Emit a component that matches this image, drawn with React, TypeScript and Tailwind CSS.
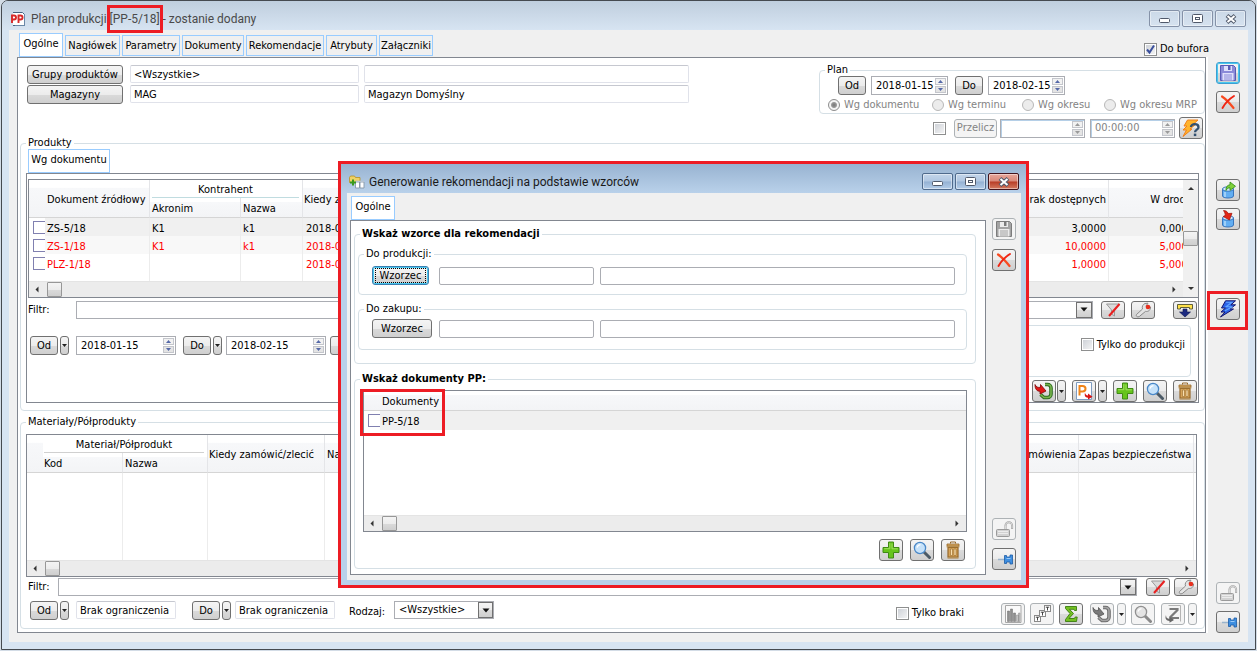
import type { ReactNode } from 'react';

const TEXT = "font-['DejaVu_Sans_Condensed','DejaVu_Sans','Liberation_Sans',sans-serif] text-[11px] leading-[14px]";
const FACE = 'bg-[linear-gradient(#f4f4f4_0%,#ececec_50%,#dadada_52%,#cfcfcf_100%)]';

/* ---------- icons ---------- */

function Svg({ children, w = 20, h = 18 }: { children: ReactNode; w?: number; h?: number }) {
  return (
    <svg width={w} height={h} viewBox={`0 0 ${w} ${h}`} className="shrink-0" aria-hidden="true">
      {children}
    </svg>
  );
}

function FloppyIcon({ gray = false }: { gray?: boolean }) {
  const body = gray ? '#a4a4a4' : '#8a8ad8';
  const edge = gray ? '#7c7c7c' : '#5a5ab4';
  const pale = gray ? '#ececec' : '#dfe0fb';
  return (
    <Svg>
      <path d="M2.5 1.5h13l2 2v13h-15z" fill={body} stroke={edge} />
      <rect x="6" y="2" width="8" height="5" fill={pale} />
      <rect x="10" y="2" width="2.5" height="4" fill={edge} />
      <rect x="4.5" y="9" width="11" height="7.5" fill={pale} />
      <path d="M6 11h8M6 13h8M6 15h8" stroke={body} />
    </Svg>
  );
}

function CrossIcon() {
  return (
    <Svg>
      <path d="M4 3.5C7 5.500 12 10.500 15.500 15" stroke="#f84a20" strokeWidth="2.200" strokeLinecap="round" fill="none" />
      <path d="M16 3C12 5.500 7 10.500 4.500 15" stroke="#f02412" strokeWidth="1.900" strokeLinecap="round" fill="none" />
    </Svg>
  );
}

function CylinderIcon({ down = false }: { down?: boolean }) {
  return (
    <Svg>
      <path d="M4.500 8v7c0 1.200 2.500 2 5.500 2s5.500-.8 5.500-2V8z" fill="#62aef2" stroke="#2b6cb8" strokeWidth=".9" />
      <ellipse cx="10" cy="8" rx="5.500" ry="2.200" fill="#d4eafc" stroke="#2b6cb8" strokeWidth=".9" />
      <path d="M7 11v5" stroke="#b4daf8" strokeWidth="1.500" />
      {down ? (
        <path d="M5.500.5c2.500 0 4 1.300 4.700 3l3.800-.2-2.600 6.700-6.200-3.500 2.200-1.200C7.200 3.500 6.500 2 5.500.5z" fill="#e32616" stroke="#9c120a" strokeWidth=".7" />
      ) : (
        <path d="M8 9.500c-.3-3.500 1.500-5.500 4-5.700V1l5.500 4.300-5.500 4V6.800c-1.700 0-3 .7-4 2.700z" fill="#7fd13b" stroke="#2f8a12" strokeWidth=".8" />
      )}
    </Svg>
  );
}

function BoltIcon() {
  return (
    <Svg>
      <path d="M7.500.8H17.500L13 4.800h4.500L12 9h3.500L2.500 17l4.500-5H3l4.500-4H3.500z" fill="#2c62e8" stroke="#14146c" strokeWidth="1" strokeLinejoin="round" />
      <path d="M8 2.200h6L8 6.800h6.500L7 10.800" fill="none" stroke="#62a8ff" strokeWidth="1.100" />
    </Svg>
  );
}

function BoltQuestionIcon() {
  return (
    <Svg>
      <path d="M6.500 1H17l-5 4.500h2.500L9 10h2L2 17.500l3.500-6.500H2L6 7H3z" fill="#ffb42c" stroke="#f0801a" strokeLinejoin="round" />
      <path d="M10 8c0-3.800 7.500-3.800 7.500.2 0 2.400-3.500 2.400-3.500 5" fill="none" stroke="#33506f" strokeWidth="2.300" />
      <rect x="12.800" y="14.600" width="2.500" height="2.500" fill="#33506f" />
    </Svg>
  );
}

function LockIcon() {
  return (
    <Svg>
      <path d="M11.500 9V5.500a3.300 3.300 0 0 1 6.600 0V9" fill="none" stroke="#a0a0a0" strokeWidth="2" />
      <path d="M11.500 9V5.500a3.300 3.300 0 0 1 6.600 0V8.500" fill="none" stroke="#e8e8e8" strokeWidth=".8" />
      <rect x="2.500" y="9.500" width="13" height="7" rx="1" fill="#d2d2d2" stroke="#9a9a9a" />
      <path d="M4 11.500h10M4 13.500h10" stroke="#ececec" />
    </Svg>
  );
}

function PinIcon() {
  return (
    <Svg>
      <path d="M4 9.500h7" stroke="#9ab4cc" strokeWidth="1.500" />
      <path d="M10.500 5.500h2v1.500h3.500V5h2.500v9H16v-2h-3.500v1.500h-2z" fill="#3f8fe0" stroke="#1d5ca6" strokeWidth=".8" />
      <path d="M12.500 8.500h4" stroke="#9bcbfa" />
    </Svg>
  );
}

function PlusIcon() {
  return (
    <Svg>
      <path d="M7.500 1h5v5.500H18v5h-5.500V17h-5v-5.500H2v-5h5.500z" fill="#66c41c" stroke="#3f8a14" />
      <path d="M8.800 2.200v5.500H3.200M11 2.500v5.300h5.800" fill="none" stroke="#a0e060" />
    </Svg>
  );
}

function LensIcon({ gray = false }: { gray?: boolean }) {
  return (
    <Svg>
      <path d="M12 11l5.500 5.500" stroke={gray ? '#8a8a8a' : '#4c5a66'} strokeWidth="3" strokeLinecap="round" />
      <circle cx="8" cy="7" r="5.600" fill={gray ? '#e4e4e4' : '#c6e2fa'} stroke={gray ? '#909090' : '#4a88c8'} strokeWidth="1.300" />
      <path d="M5 6.500c.5-1.800 1.800-2.600 3.500-2.800" stroke="#fff" strokeWidth="1.300" fill="none" />
    </Svg>
  );
}

function TrashIcon() {
  return (
    <Svg>
      <path d="M7.500 2.500V1h5v1.500" fill="none" stroke="#96682a" />
      <path d="M4 3h12v2H4z" fill="#dcae68" stroke="#96682a" strokeWidth=".8" />
      <path d="M5 6.500h10V16H5z" fill="#d6a45a" stroke="#96682a" strokeWidth="1.200" />
      <path d="M7.500 8h2v6.500h-2zM11 8h2v6.500h-2z" fill="#f9dfae" stroke="#96682a" strokeWidth=".6" />
      <path d="M3.500 5.800h13M4.500 17h11" stroke="#b08038" />
    </Svg>
  );
}

function FunnelOffIcon() {
  return (
    <Svg h={16}>
      <path d="M3.500 2h13l-5 6v6l-3-2V8z" fill="#dadada" stroke="#9a9a9a" />
      <path d="M16.500 2L6 14" stroke="#e82020" strokeWidth="2" />
    </Svg>
  );
}

function WrenchIcon() {
  return (
    <Svg h={16}>
      <path d="M3.500 12.500l6-5.500c-.8-2.500.3-4.600 2.500-5.500l3-.3L13 4l1.500 2.200L17.500 5c.3 2.800-2 5-5 4.400l-6.300 5.200c-2 1-3.500-.6-2.700-2.100z" fill="#e4e4e4" stroke="#8a8a8a" />
      <circle cx="15" cy="5" r="2.300" fill="#e8301e" />
    </Svg>
  );
}

function CollectIcon() {
  return (
    <Svg h={16}>
      <path d="M2.500 2.500h15v4.500h-3V5.500h-9V7h-3z" fill="#ffe14a" stroke="#50502e" strokeWidth=".9" />
      <path d="M8 7h4v3h3.500L10 15 4.500 10H8z" fill="#1c2a80" stroke="#10184e" strokeWidth=".6" />
    </Svg>
  );
}

function RecycleIcon({ gray = false }: { gray?: boolean }) {
  return (
    <Svg>
      <path d="M11 2.500h2.500c2 0 3.500 1.400 3.500 3.500v6c0 2-1.500 3.500-3.500 3.500H10L6.500 12.500" fill="none" stroke={gray ? '#6c6c6c' : '#2c6a20'} strokeWidth="3.600" />
      <path d="M11 2.500h2.500c2 0 3.500 1.400 3.500 3.500v6c0 2-1.500 3.500-3.500 3.500H10L6.500 12.500" fill="none" stroke={gray ? '#a4a4a4' : '#78b44c'} strokeWidth="1.600" />
      <path d="M1 2.500c1 2.500 3 3.300 5.500 2.800V2.500l5.500 6.500-6 3V9.300C3 9.200 1 7.500 1 2.500z" fill={gray ? '#7a7a7a' : '#e01818'} stroke={gray ? '#505050' : '#7c0808'} strokeWidth=".8" />
    </Svg>
  );
}

function DocumentPIcon() {
  return (
    <Svg>
      <path d="M2.500.5h15v17h-15z" fill="#fff" stroke="#7f9cc0" />
      <path d="M5.500 13.500V4h3c4 0 4 5.500 0 5.500H6" fill="none" stroke="#f08418" strokeWidth="2" />
      <path d="M11 10.500c.3 2 1 2.700 3 2.900V11.500l4.500 3.300-4.500 2.700v-1.800c-3 0-3.700-2.200-3-5.200z" fill="#d81414" />
    </Svg>
  );
}

function DocumentZIcon() {
  return (
    <Svg>
      <path d="M5.500.5h12v16" fill="none" stroke="#b4b4b4" />
      <path d="M6.500 4h8v1l-7 7v1h8.500" fill="none" stroke="#7a7a7a" strokeWidth="2.200" />
      <path d="M3 10c0 3 1.500 3.600 3.500 3.700V11.500l4.500 3.500-4.500 2.700v-1.800C3.500 15.700 1.500 14 3 10z" fill="#666" />
    </Svg>
  );
}

function ChartIcon() {
  return (
    <Svg>
      <path d="M2.500.5h15.500v17H2.500z" fill="#fafafa" stroke="#a8a8a8" />
      <path d="M4.500 6h2v10.500h-2zM7.500 4h2v12.500h-2zM10.500 8h2v8.500h-2z" fill="#8f8f8f" stroke="#6a6a6a" strokeWidth=".5" />
      <path d="M13.500 10h2v6.500h-2zM15.500 8h1.500v8.500h-1.500z" fill="#c4c4c4" stroke="#8a8a8a" strokeWidth=".5" />
    </Svg>
  );
}

function CascadeIcon() {
  return (
    <Svg>
      {[[2, 11], [7, 6], [12, 1]].map(([x, y]) => (
        <g key={x}>
          <rect x={x + 0.5} y={y - 0.5} width="6" height="6" fill="#fff" stroke="#8a8a8a" />
          <path d={`M${x + 1.8} ${y + 1.2}h3.400M${x + 3.5} ${y + 1}v3.500`} stroke="#444" />
        </g>
      ))}
    </Svg>
  );
}

function SumIcon() {
  return (
    <Svg>
      <path d="M4.500 1.500h11v4h-2l-.5-1.200H8.500l4 4.200-4.500 5h5.500l.7-1.500h2L15.500 16.500h-11v-2l4.500-6-4.500-5z" fill="#74c022" stroke="#3a7c10" strokeWidth=".9" />
    </Svg>
  );
}

function PlanIcon() {
  return (
    <Svg w={16} h={16}>
      <path d="M3 1.500h9.500l2 2v11H3" fill="#fff" stroke="#44607e" />
      <path d="M5 14.500h9.500V3" fill="none" stroke="#6a88a8" />
      <path d="M2 12V4.500h2c2.700 0 2.700 4 0 4H2.500M8.500 12V4.500h2c2.700 0 2.700 4 0 4H9" fill="none" stroke="#d82828" strokeWidth="1.900" />
    </Svg>
  );
}

function FolderAddIcon() {
  return (
    <Svg w={16} h={14}>
      <path d="M.5 2.500l1-1.500h4l1 1.500H11v5H.5z" fill="#f0d264" stroke="#b89020" strokeWidth=".8" />
      <path d="M6.500 7h4v6h-4zM11 7h4v6h-4z" fill="#fff" stroke="#8796a8" strokeWidth=".9" />
      <path d="M6.500 6.300h8.500" stroke="#b8c4d2" strokeWidth="1.400" />
      <path d="M4 4.500v6M1 7.500h6" stroke="#3a9a1c" strokeWidth="2" />
    </Svg>
  );
}

function Triangle({ dir, color = '#333' }: { dir: 'up' | 'down' | 'left' | 'right'; color?: string }) {
  const shapes = { up: 'M1 5L4 2L7 5z', down: 'M1 2L4 5L7 2z', left: 'M5.500 0.500L2.500 3.500L5.500 6.500z', right: 'M2.500 0.500L5.500 3.500L2.500 6.500z' };
  return (
    <svg width="8" height="7" viewBox="0 0 8 7" className="shrink-0" aria-hidden="true">
      <path d={shapes[dir]} fill={color} />
    </svg>
  );
}

/* ---------- controls ---------- */

function Btn({ children, className = '', disabled = false, focused = false }: { children: ReactNode; className?: string; disabled?: boolean; focused?: boolean }) {
  const look = disabled ? 'border-[#adb2b5] bg-[#f4f4f4] text-[#838383]' : focused ? `border-[#3c7fb1] ring-1 ring-inset ring-[#48c8f0] ${FACE}` : `border-[#707070] ${FACE}`;
  return (
    <button type="button" disabled={disabled} className={`flex h-[19px] shrink-0 items-center justify-center rounded-[3px] border whitespace-nowrap ${look} ${className}`}>
      {focused ? <span className="border border-dotted border-black px-[4px] leading-[13px]">{children}</span> : children}
    </button>
  );
}

function IconBtn({ label, children, muted = false, focused = false, short = false }: { label: string; children: ReactNode; muted?: boolean; focused?: boolean; short?: boolean }) {
  const look = muted ? 'border-[#adb2b5] bg-[#f4f4f4]' : focused ? `border-[#3c9fd1] ring-1 ring-inset ring-[#48c8f0] ${FACE}` : `border-[#707070] ${FACE}`;
  return (
    <button type="button" aria-label={label} className={`flex w-[24px] shrink-0 items-center justify-center rounded-[3px] border ${short ? 'h-[18px]' : 'h-[22px]'} ${look}`}>
      {children}
    </button>
  );
}

function Split({ tall = false, muted = false }: { tall?: boolean; muted?: boolean }) {
  return (
    <button type="button" aria-label="Więcej opcji" className={`flex w-[9px] shrink-0 items-center justify-center rounded-[3px] border ${tall ? 'h-[22px]' : 'h-[19px]'} ${muted ? 'border-[#adb2b5] bg-[#f4f4f4]' : `border-[#707070] ${FACE}`}`}>
      <svg width="5" height="3" viewBox="0 0 5 3" aria-hidden="true">
        <path d="M0 0h5L2.500 3z" fill="#222" />
      </svg>
    </button>
  );
}

function Field({ label, value = '', className = '', strong = false }: { label: string; value?: string; className?: string; strong?: boolean }) {
  return <input aria-label={label} defaultValue={value} className={`h-[18px] min-w-0 rounded-[2px] border bg-white px-[3px] outline-none ${strong ? 'border-[#abadb3]' : 'border-[#e0e2ea] border-t-[#c6c8d0]'} ${className}`} />;
}

function Spin({ label, value, className, muted = false }: { label: string; value: string; className: string; muted?: boolean }) {
  const arrow = muted ? '#9a9a9a' : '#5468a8';
  return (
    <span className={`flex h-[19px] shrink-0 border bg-white ${muted ? 'border-[#abadb3] shadow-[inset_1px_1px_0_#b5cfe7]' : 'border-[#abadb3]'} ${className}`}>
      <input aria-label={label} defaultValue={value} disabled={muted} className={`w-0 min-w-0 flex-1 bg-transparent pl-[4px] outline-none ${muted ? 'text-[#838383]' : ''}`} />
      <span className="m-px flex w-[11px] flex-col gap-px">
        <button type="button" aria-label={`${label}: zwiększ`} className="flex h-[7px] items-center justify-center border border-[#c4c6cc] bg-[#f2f2f2]">
          <svg width="5" height="3" viewBox="0 0 5 3" aria-hidden="true"><path d="M0 3L2.500 0L5 3z" fill={arrow} /></svg>
        </button>
        <button type="button" aria-label={`${label}: zmniejsz`} className="flex h-[7px] items-center justify-center border border-[#c4c6cc] bg-[#e4e4e4]">
          <svg width="5" height="3" viewBox="0 0 5 3" aria-hidden="true"><path d="M0 0L2.500 3L5 0z" fill={arrow} /></svg>
        </button>
      </span>
    </span>
  );
}

function Check({ children, label, checked = false }: { children?: ReactNode; label?: string; checked?: boolean }) {
  return (
    <label className="flex items-center gap-[3px] whitespace-nowrap">
      <span className="relative flex h-[13px] w-[13px]">
        <input type="checkbox" aria-label={label} defaultChecked={checked} className="peer h-[13px] w-[13px] appearance-none border border-[#8e8f8f] bg-[linear-gradient(135deg,#cbcfd5,#f6f6f6)] shadow-[inset_0_0_0_1px_#fff]" />
        <svg width="13" height="13" viewBox="0 0 13 13" className="pointer-events-none absolute inset-0 hidden peer-checked:block" aria-hidden="true">
          <path d="M3 6.500l2.500 3L10 2.500" fill="none" stroke="#3a4f9c" strokeWidth="2" />
        </svg>
      </span>
      {children}
    </label>
  );
}

function Radio({ children, checked = false, className }: { children: ReactNode; checked?: boolean; className: string }) {
  return (
    <label className={`flex shrink-0 items-center gap-[4px] whitespace-nowrap text-[#838383] ${className}`}>
      <input type="radio" name="basis" disabled defaultChecked={checked} className="h-[12px] w-[12px] appearance-none rounded-full border border-[#b8b8b8] bg-[#ececec] checked:border-[#8e8e8e] checked:bg-[radial-gradient(#777_0%,#999_35%,#f4f4f4_50%)]" />
      {children}
    </label>
  );
}

function Group({ title, bold = false, className = '', children }: { title: string; bold?: boolean; className?: string; children: ReactNode }) {
  return (
    <fieldset className={`min-w-0 rounded-[4px] border border-[#d5dfe5] ${className}`}>
      <legend className={`px-[2px] ${bold ? 'ml-[2px] font-bold' : ''}`}>{title}</legend>
      {children}
    </fieldset>
  );
}

function Tab({ children, active = false, className }: { children: ReactNode; active?: boolean; className: string }) {
  return (
    <button type="button" role="tab" aria-selected={active} className={`shrink-0 border border-[#99ccff] text-center whitespace-nowrap ${active ? 'h-[24px] bg-white pb-[3px]' : 'mb-px h-[21px] bg-[#f0f0f0]'} ${className}`}>
      {children}
    </button>
  );
}

function WindowButtons({ active = false }: { active?: boolean }) {
  const base = active
    ? 'border-[#4f6a8c] bg-[linear-gradient(#c3d5ea_0%,#b0c7e2_48%,#94b1d3_52%,#b4cde9_100%)]'
    : 'border-[#8592a8] bg-[linear-gradient(#cbd9e8,#d6e2ef)]';
  const close = active ? 'border-[#43141c] bg-[linear-gradient(#e8a79b_0%,#d88878_48%,#b83c26_52%,#d47a60_100%)]' : base;
  const box = 'flex h-[17px] w-[31px] items-center justify-center rounded-[2px] border shadow-[inset_0_0_0_1px_rgba(255,255,255,0.45)]';
  return (
    <div className="flex gap-[2px]">
      <button type="button" aria-label="Minimalizuj" className={`${box} ${base}`}>
        <svg width="12" height="10" viewBox="0 0 12 10" aria-hidden="true"><rect x=".5" y="4.500" width="10" height="4" rx="1" fill="#fff" stroke="#50596a" /></svg>
      </button>
      <button type="button" aria-label="Maksymalizuj" className={`${box} ${base}`}>
        <svg width="11" height="9" viewBox="0 0 11 9" aria-hidden="true"><rect x=".5" y=".5" width="10" height="8" rx="1" fill="#fff" stroke="#50596a" /><rect x="3.500" y="3.500" width="4" height="2" fill="none" stroke="#50596a" /></svg>
      </button>
      <button type="button" aria-label="Zamknij" className={`${box} ${close}`}>
        <svg width="12" height="10" viewBox="0 0 12 10" aria-hidden="true"><path d="M2 1.500l8 7M10 1.500l-8 7" stroke="#50596a" strokeWidth="4" /><path d="M2.500 2l7 6M9.500 2l-7 6" stroke="#fff" strokeWidth="2" /></svg>
      </button>
    </div>
  );
}

function HScroll() {
  return (
    <div className="flex h-[16px] flex-1 items-center border-t border-[#e4e4e4] bg-[#ececec] px-[4px]">
      <Triangle dir="left" />
      <span className={`ml-[6px] h-[15px] w-[15px] rounded-[1px] border border-[#979797] ${FACE}`} />
      <span className="ml-auto mr-[1px] flex"><Triangle dir="right" /></span>
    </div>
  );
}

function Combo({ label }: { label: string }) {
  return (
    <span className="flex h-[18px] min-w-0 flex-1 border border-[#abadb3] bg-white">
      <input aria-label={label} className="w-0 min-w-0 flex-1 px-[3px] outline-none" />
      <button type="button" aria-label="Rozwiń listę" className={`flex w-[16px] items-center justify-center border border-[#707070] ${FACE}`}>
        <ArrowDown />
      </button>
    </span>
  );
}

function ArrowDown() {
  return (
    <svg width="8" height="5" viewBox="0 0 8 5" aria-hidden="true">
      <path d="M0.500 0.500h7L4 4.500z" fill="#111" />
    </svg>
  );
}

function Mark({ className }: { className: string }) {
  return <span aria-hidden="true" className={`pointer-events-none absolute border-3 border-[#ed1c24] ${className}`} />;
}

/* ---------- tables ---------- */

const HEAD = 'border-b border-[#d5d5d5] bg-[linear-gradient(#fff_20%,#f7f8fa_22%,#f3f4f6_100%)] pt-[2px] pr-0 pb-0 pl-0 font-normal';
const LINE = 'border-r border-r-[#e4e5e8]';
const CELL = 'border-r border-[#ececec] px-[2px] pt-[3px] pb-0 whitespace-nowrap';
const EDGE = 'px-[3px] pt-[3px] pb-0 whitespace-nowrap';

function RowCheck({ label }: { label: string }) {
  return <input type="checkbox" aria-label={label} className="ml-[4px] block h-[13px] w-[12px] appearance-none border border-r-0 border-[#8080b0] bg-white" />;
}

const products = [
  { doc: 'ZS-5/18', code: 'K1', name: 'k1', when: '2018-01-15', missing: '3,0000', onWay: '0,0000', tone: 'bg-[#f0f0f0]' },
  { doc: 'ZS-1/18', code: 'K1', name: 'k1', when: '2018-01-15', missing: '10,0000', onWay: '5,0000', tone: 'bg-[#f8f8f8] text-[#ff0000]' },
  { doc: 'PLZ-1/18', code: '', name: '', when: '2018-01-15', missing: '1,0000', onWay: '5,0000', tone: 'text-[#ff0000]' },
];

function ProductsTable() {
  return (
    <div className="flex h-[119px] border border-r-0 border-[#828790] bg-white">
      <div className="flex min-w-0 flex-1 flex-col">
        <div className="h-[101px] overflow-hidden">
          <table className="h-full w-[calc(100%+14px)] table-fixed border-separate border-spacing-0">
            <colgroup>
              <col className="w-[16px]" />
              <col className="w-[105px]" />
              <col className="w-[91px]" />
              <col className="w-[62px]" />
              <col className="w-[120px]" />
              <col />
              <col className="w-[100px]" />
              <col className="w-[88px]" />
            </colgroup>
            <thead>
              <tr className="h-[18px]">
                <th rowSpan={2} className={HEAD} aria-label="Zaznaczenie" />
                <th rowSpan={2} className={`${HEAD} ${LINE} pl-[2px] text-left whitespace-nowrap`}>Dokument źródłowy</th>
                <th colSpan={2} className={`border-r border-[#e4e5e8] bg-white p-0 font-normal`}>
                  <div className="mx-[2px] mr-[3px] h-[18px] border-b border-[#c0dce0] pt-[3px]">Kontrahent</div>
                </th>
                <th rowSpan={2} className={`${HEAD} pl-px text-left whitespace-nowrap`}>Kiedy zl.</th>
                <th rowSpan={2} className={`${HEAD} ${LINE}`} />
                <th rowSpan={2} className={`${HEAD} ${LINE} pr-[2px] text-right whitespace-nowrap`}>Brak dostępnych</th>
                <th rowSpan={2} className={`${HEAD} text-right whitespace-nowrap`}>W drodze</th>
              </tr>
              <tr className="h-[20px]">
                <th className={`${HEAD} ${LINE} pl-[2px] text-left`}>Akronim</th>
                <th className={`${HEAD} ${LINE} pl-[2px] text-left`}>Nazwa</th>
              </tr>
            </thead>
            <tbody>
              {products.map((p) => (
                <tr key={p.doc} className={`h-[18px] ${p.tone}`}>
                  <td className="bg-white p-0"><RowCheck label={p.doc} /></td>
                  <td className={CELL}>{p.doc}</td>
                  <td className={CELL}>{p.code}</td>
                  <td className={CELL}>{p.name}</td>
                  <td className={EDGE}>{p.when}</td>
                  <td className={CELL} />
                  <td className={`${CELL} text-right`}>{p.missing}</td>
                  <td className={`${EDGE} text-right`}>{p.onWay}</td>
                </tr>
              ))}
              <tr aria-hidden="true">
                <td className="p-0" />
                <td className={CELL} />
                <td className={CELL} />
                <td className={CELL} />
                <td className="p-0" />
                <td className={CELL} />
                <td className={CELL} />
                <td className="p-0" />
              </tr>
            </tbody>
          </table>
        </div>
        <HScroll />
      </div>
      <div className="flex w-[15px] flex-col items-center bg-[#f0f0f0] py-[5px]">
        <Triangle dir="up" />
        <span className={`mt-[39px] h-[15px] w-[15px] rounded-[1px] border border-[#979797] ${FACE}`} />
        <span className="mt-auto flex"><Triangle dir="down" /></span>
      </div>
    </div>
  );
}

function MaterialsTable() {
  return (
    <div className="mt-[5px] mr-[2px] flex h-[143px] flex-col border border-[#828790] bg-white">
      <div className="h-[125px] overflow-hidden">
        <table className="h-full w-full table-fixed border-separate border-spacing-0">
          <colgroup>
            <col className="w-[16px]" />
            <col className="w-[80px]" />
            <col className="w-[85px]" />
            <col className="w-[117px]" />
            <col className="w-[100px]" />
            <col />
            <col className="w-[120px]" />
            <col className="w-[115px]" />
            <col className="w-[2px]" />
          </colgroup>
          <thead>
            <tr className="h-[18px]">
              <th rowSpan={2} className={HEAD} aria-label="Zaznaczenie" />
              <th colSpan={2} className="border-r border-[#e4e5e8] bg-white p-0 font-normal">
                <div className="mx-[1px] mr-[3px] h-[18px] border-b border-[#d0d0d0] pt-[3px]">Materiał/Półprodukt</div>
              </th>
              <th rowSpan={2} className={`${HEAD} ${LINE} pl-[1px] text-left whitespace-nowrap`}>Kiedy zamówić/zlecić</th>
              <th rowSpan={2} className={`${HEAD} pl-[2px] text-left whitespace-nowrap`}>Na kiedy</th>
              <th rowSpan={2} className={HEAD} />
              <th rowSpan={2} className={`${HEAD} ${LINE} pr-[2px] text-right whitespace-nowrap`}>Ilość zamówienia</th>
              <th rowSpan={2} className={`${HEAD} ${LINE} text-left whitespace-nowrap`}>Zapas bezpieczeństwa</th>
              <th rowSpan={2} className={HEAD} aria-label="Koniec" />
            </tr>
            <tr className="h-[20px]">
              <th className={`${HEAD} ${LINE} pl-[1px] text-left`}>Kod</th>
              <th className={`${HEAD} ${LINE} pl-[2px] text-left`}>Nazwa</th>
            </tr>
          </thead>
          <tbody>
            <tr>
              <td className="p-0" />
              <td className={CELL} />
              <td className={CELL} />
              <td className={CELL} />
              <td className="p-0" />
              <td className="p-0" />
              <td className={CELL} />
              <td className={CELL} />
              <td className="p-0" />
            </tr>
          </tbody>
        </table>
      </div>
      <HScroll />
    </div>
  );
}

/* ---------- dialog ---------- */

function Pattern({ title, className, children }: { title: string; className: string; children: ReactNode }) {
  return (
    <Group title={title} className={`pl-[5px] ${className}`}>
      <div className="flex items-end pr-[11px] pl-[8px]">
        <div className="w-[67px] shrink-0">{children}</div>
        <Field strong label={`${title} kod`} className="w-[155px] shrink-0" />
        <Field strong label={`${title} nazwa`} className="ml-[6px] flex-1" />
      </div>
    </Group>
  );
}

function Dialog() {
  return (
    <section role="dialog" aria-label="Generowanie rekomendacji na podstawie wzorców" className="absolute top-[161px] left-[338px] flex h-[427px] w-[691px] flex-col border-3 border-[#ed1c24] bg-[#b9d1ea]">
      <header className="flex h-[29px] items-center bg-[linear-gradient(#98b3d1,#b9d1ea)] pt-[6px] pr-[7px] pl-[8px]">
        <FolderAddIcon />
        <h2 className="ml-[4px] flex-1 pt-px font-['Roboto',sans-serif] text-[12px] text-[#1a1a1a]">Generowanie rekomendacji na podstawie wzorców</h2>
        <WindowButtons active />
      </header>
      <div className="mr-[5px] mb-[5px] ml-[6px] flex flex-1 bg-[#f0f0f0] pb-[5px]">
        <div className="flex min-w-0 flex-1 flex-col pt-[3px] pl-[3px]">
          <div role="tablist" className="pl-px"><Tab active className="block w-[44px]">Ogólne</Tab></div>
          <div className="flex-1 border border-[#828790] bg-white pt-[6px] pr-[9px] pl-[3px]">
            <Group title="Wskaż wzorce dla rekomendacji" bold className="pr-[8px] pb-[13px] pl-[3px]">
              <Pattern title="Do produkcji:" className="mt-[6px] pb-[9px]">
                <div className="pt-[5px]"><Btn focused className="w-[57px]">Wzorzec</Btn></div>
              </Pattern>
              <Pattern title="Do zakupu:" className="mt-[7px] pb-[11px]">
                <div className="pt-[3px]"><Btn className="w-[60px]">Wzorzec</Btn></div>
              </Pattern>
            </Group>
            <Group title="Wskaż dokumenty PP:" bold className="mt-[8px] pr-[8px] pb-[7px] pl-[3px]">
              <div className="relative mt-[4px] ml-[5px] flex h-[142px] flex-col border border-[#828790] bg-white">
                <table className="w-full table-fixed border-separate border-spacing-0">
                  <colgroup>
                    <col className="w-[16px]" />
                    <col />
                  </colgroup>
                  <thead>
                    <tr className="h-[20px]">
                      <th className={HEAD} aria-label="Zaznaczenie" />
                      <th className={`${HEAD} pl-[2px] text-left`}>Dokumenty</th>
                    </tr>
                  </thead>
                  <tbody>
                    <tr className="h-[19px]">
                      <td className="p-0"><RowCheck label="PP-5/18" /></td>
                      <td className="bg-[#f0f0f0] pt-[2px] pr-0 pb-0 pl-[2px]">PP-5/18</td>
                    </tr>
                  </tbody>
                </table>
                <div className="mt-auto flex"><HScroll /></div>
                <Mark className="top-[-2px] left-[-4px] h-[47px] w-[85px]" />
              </div>
              <div className="mt-[7px] mr-[2px] flex justify-end gap-[7px]">
                <IconBtn label="Dodaj"><PlusIcon /></IconBtn>
                <IconBtn label="Podgląd"><LensIcon /></IconBtn>
                <IconBtn label="Usuń"><TrashIcon /></IconBtn>
              </div>
            </Group>
          </div>
        </div>
        <div className="flex w-[35px] flex-col pt-[25px] pb-[5px] pl-[6px]">
          <IconBtn label="Zapisz" muted><FloppyIcon gray /></IconBtn>
          <div className="mt-[9px]"><IconBtn label="Anuluj"><CrossIcon /></IconBtn></div>
          <div className="mt-auto flex flex-col gap-[8px]">
            <IconBtn label="Odblokuj" muted><LockIcon /></IconBtn>
            <IconBtn label="Przypnij"><PinIcon /></IconBtn>
          </div>
        </div>
      </div>
    </section>
  );
}

/* ---------- main window ---------- */

function HeaderArea() {
  return (
    <div className="flex items-start justify-between">
      <div className="flex flex-col gap-px pt-[1px] pl-[9px]">
        <div className="flex items-start">
          <Btn className="w-[96px]">Grupy produktów</Btn>
          <Field label="Grupy produktów" value="<Wszystkie>" className="ml-[7px] w-[229px]" />
          <Field label="Grupy produktów, nazwa" className="ml-[5px] w-[325px]" />
        </div>
        <div className="flex items-start">
          <Btn className="w-[96px]">Magazyny</Btn>
          <Field label="Magazyn" value="MAG" className="ml-[7px] w-[229px]" />
          <Field label="Magazyn, nazwa" value="Magazyn Domyślny" className="ml-[5px] w-[325px]" />
        </div>
      </div>
      <div className="-mt-px w-[386px]">
        <Group title="Plan" className="pl-[5px]">
          <div className="-mt-px flex pl-[13px]">
            <Btn className="w-[28px]">Od</Btn>
            <Spin label="Plan od" value="2018-01-15" className="ml-[5px] w-[77px]" />
            <Btn className="ml-[7px] w-[28px]">Do</Btn>
            <Spin label="Plan do" value="2018-02-15" className="ml-[5px] w-[77px]" />
          </div>
          <div className="mt-[3px] flex pb-[1px] pl-[3px]">
            <Radio checked className="w-[104px]">Wg dokumentu</Radio>
            <Radio className="w-[90px]">Wg terminu</Radio>
            <Radio className="w-[82px]">Wg okresu</Radio>
            <Radio className="">Wg okresu MRP</Radio>
          </div>
        </Group>
        <div className="mt-[3px] flex items-center justify-end pr-[2px]">
          <Check label="Przelicz automatycznie" />
          <Btn disabled className="ml-[8px] w-[43px]">Przelicz</Btn>
          <Spin muted label="Data przeliczenia" value="" className="ml-[3px] w-[85px]" />
          <Spin muted label="Godzina przeliczenia" value="00:00:00" className="mr-[4px] ml-[5px] w-[85px]" />
          <IconBtn label="Pomoc przeliczania"><BoltQuestionIcon /></IconBtn>
        </div>
      </div>
    </div>
  );
}

function Products() {
  return (
    <Group title="Produkty" className="-mt-[3px] ml-[2px] pr-[5px] pb-[7px] pl-[5px]">
      <div role="tablist" className="-mt-px pl-[2px]"><Tab active className="block w-[82px]">Wg dokumentu</Tab></div>
      <div className="border border-[#828790] pt-[5px] pl-[1px]">
        <ProductsTable />
        <div className="mt-[2px] flex h-[19px] items-center pr-[1px]">
          <label className="w-[48px] shrink-0">Filtr:</label>
          <Combo label="Filtr produktów" />
          <span className="ml-[8px] flex gap-[6px]">
            <IconBtn short label="Wyczyść filtr"><FunnelOffIcon /></IconBtn>
            <IconBtn short label="Konstruktor filtra"><WrenchIcon /></IconBtn>
          </span>
          <span className="ml-[18px]"><IconBtn short label="Zbierz"><CollectIcon /></IconBtn></span>
        </div>
        <div className="mt-[6px] flex h-[52px] items-start">
          <div className="flex pt-[11px] pl-[2px]">
            <Btn className="mr-[2px] w-[28px]">Od</Btn>
            <Split />
            <Spin label="Produkty od" value="2018-01-15" className="ml-[7px] w-[100px]" />
            <Btn className="mr-[2px] ml-[7px] w-[28px]">Do</Btn>
            <Split />
            <Spin label="Produkty do" value="2018-02-15" className="ml-[4px] w-[100px]" />
            <Btn className="ml-[4px] w-[50px]">Okres</Btn>
          </div>
          <div className="mr-[7px] ml-auto flex h-[52px] w-[400px] items-center justify-end rounded-[4px] border border-[#d5dfe5] pr-[5px] pb-[13px]">
            <Check>Tylko do produkcji</Check>
          </div>
        </div>
        <div className="mt-[3px] flex justify-end pr-[1px]">
          <IconBtn label="Przekształć"><RecycleIcon /></IconBtn>
          <span className="ml-px"><Split tall /></span>
          <span className="ml-[6px] flex gap-[2px]">
            <IconBtn label="Generuj dokument"><DocumentPIcon /></IconBtn>
            <Split tall />
          </span>
          <span className="ml-[6px] flex gap-[6px]">
            <IconBtn label="Dodaj produkt"><PlusIcon /></IconBtn>
            <IconBtn label="Podgląd produktu"><LensIcon /></IconBtn>
            <IconBtn label="Usuń produkt"><TrashIcon /></IconBtn>
          </span>
        </div>
      </div>
    </Group>
  );
}

function Materials() {
  return (
    <Group title="Materiały/Półprodukty" className="mt-[4px] ml-[2px] pr-[5px] pb-[3px] pl-[5px]">
      <MaterialsTable />
      <div className="mt-px flex h-[18px] items-center pr-[1px] pl-[2px]">
        <label className="w-[30px] shrink-0">Filtr:</label>
        <Combo label="Filtr materiałów" />
        <span className="ml-[9px] flex gap-[4px]">
          <IconBtn short label="Wyczyść filtr"><FunnelOffIcon /></IconBtn>
          <IconBtn short label="Konstruktor filtra"><WrenchIcon /></IconBtn>
        </span>
      </div>
      <div className="mt-[5px] flex h-[24px] items-start pr-[2px] pl-[4px]">
        <Btn className="mr-[2px] w-[28px]">Od</Btn>
        <Split />
        <Field label="Materiały od" value="Brak ograniczenia" className="ml-[7px] w-[100px]" />
        <Btn className="mr-[2px] ml-[16px] w-[28px]">Do</Btn>
        <Split />
        <Field label="Materiały do" value="Brak ograniczenia" className="ml-[4px] w-[100px]" />
        <label htmlFor="kind" className="mt-[4px] ml-[14px] w-[45px]">Rodzaj:</label>
        <span className="relative">
          <select id="kind" className="block h-[18px] w-[100px] appearance-none border border-[#abadb3] bg-white pl-[4px] outline-none">
            <option>&lt;Wszystkie&gt;</option>
          </select>
          <span className={`pointer-events-none absolute top-px right-px flex h-[16px] w-[15px] items-center justify-center border border-[#707070] ${FACE}`}><ArrowDown /></span>
        </span>
        <div className="mt-[5px] mr-[37px] ml-auto"><Check>Tylko braki</Check></div>
        <div className="mt-[2px] flex">
          <IconBtn muted label="Wykres"><ChartIcon /></IconBtn>
          <span className="mx-[5px]"><IconBtn muted label="Struktura"><CascadeIcon /></IconBtn></span>
          <IconBtn label="Suma"><SumIcon /></IconBtn>
          <span className="ml-[7px] flex gap-[3px]">
            <IconBtn muted label="Przekształć materiał"><RecycleIcon gray /></IconBtn>
            <Split tall muted />
          </span>
          <span className="ml-[5px]"><IconBtn muted label="Podgląd materiału"><LensIcon gray /></IconBtn></span>
          <span className="ml-[6px] flex gap-[3px]">
            <IconBtn muted label="Generuj zamówienie"><DocumentZIcon /></IconBtn>
            <Split tall muted />
          </span>
        </div>
      </div>
    </Group>
  );
}

export default function App() {
  return (
    <div className={`relative flex min-h-screen w-full flex-col bg-[#d3dce6] px-px pb-px text-black ${TEXT}`}>
      <main className="flex flex-1 flex-col rounded-t-[7px] border border-[#454a50] bg-[#d7e4f2]">
        <header className="flex h-[29px] items-center rounded-t-[6px] bg-[linear-gradient(#bfcede,#d7e4f2)] pt-[6px] pr-[9px] pl-[8px]">
          <PlanIcon />
          <h1 className="ml-[5px] flex-1 pt-px font-['Roboto',sans-serif] text-[12px] text-[#4a4a4a]">
            Plan produkcji{' '}
            <span className="relative">
              [PP-5/18]
              <Mark className="-inset-x-[3px] -inset-y-[7px]" />
            </span>{' '}
            - zostanie dodany
          </h1>
          <WindowButtons />
        </header>
        <div className="mx-[7px] mb-[7px] flex flex-1 flex-col bg-[#f0f0f0] pb-[9px]">
          <div className="flex h-[27px] items-end justify-between pr-[39px] pl-[10px]">
            <div role="tablist" className="flex items-end gap-[2px]">
              <Tab active className="w-[44px]">Ogólne</Tab>
              <Tab className="w-[55px]">Nagłówek</Tab>
              <Tab className="w-[58px]">Parametry</Tab>
              <Tab className="w-[62px]">Dokumenty</Tab>
              <Tab className="w-[78px]">Rekomendacje</Tab>
              <Tab className="w-[51px]">Atrybuty</Tab>
              <Tab className="w-[54px]">Załączniki</Tab>
            </div>
            <div className="pb-[1px]"><Check checked>Do bufora</Check></div>
          </div>
          <div className="flex flex-1">
            <div className="ml-[8px] min-w-0 flex-1 border border-[#828790] bg-white pt-[6px] pb-[2px]">
              <HeaderArea />
              <Products />
              <Materials />
            </div>
            <div className="flex w-[42px] flex-col border-l-2 border-white pt-[5px] pl-[8px]">
              <IconBtn focused label="Zapisz plan"><FloppyIcon /></IconBtn>
              <div className="mt-[7px]"><IconBtn label="Zamknij plan"><CrossIcon /></IconBtn></div>
              <div className="mt-[66px] flex flex-col gap-[7px]">
                <IconBtn label="Eksport"><CylinderIcon /></IconBtn>
                <IconBtn label="Import"><CylinderIcon down /></IconBtn>
              </div>
              <div className="relative mt-[68px] w-[24px]">
                <IconBtn label="Generuj rekomendacje"><BoltIcon /></IconBtn>
                <Mark className="-top-[7px] -left-[9px] h-[39px] w-[41px]" />
              </div>
              <div className="mt-auto flex flex-col gap-[7px]">
                <IconBtn muted label="Odblokuj plan"><LockIcon /></IconBtn>
                <IconBtn label="Przypnij plan"><PinIcon /></IconBtn>
              </div>
            </div>
          </div>
        </div>
      </main>
      <Dialog />
    </div>
  );
}
